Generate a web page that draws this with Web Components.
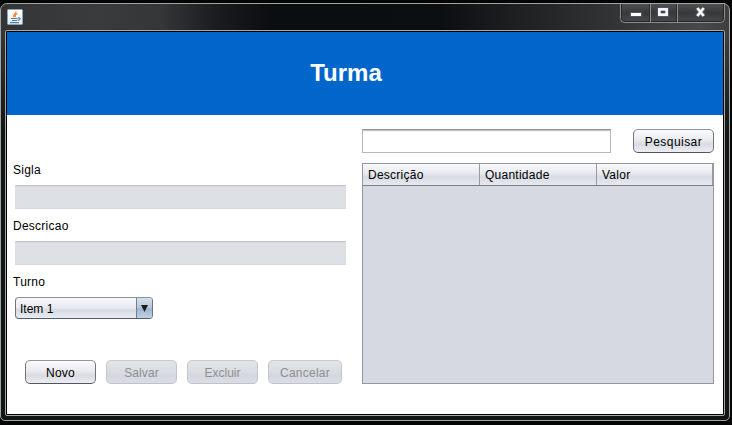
<!DOCTYPE html>
<html lang="pt-BR"><head><meta charset="utf-8"><title>Turma</title>
<style>
html,body{margin:0;width:732px;height:425px;overflow:hidden;background:#050505}
body{font:12px "Liberation Sans",Arial,sans-serif;color:#000}
.left{display:flex;flex-direction:column;padding:48px 0 0 6px;width:349px;box-sizing:border-box}
.actions{display:flex;gap:10px;padding:29px 0 0 12px}
.right{display:flex;flex-direction:column;gap:10px;padding:14px 9px 0 6px;flex:1}
.search{display:flex;justify-content:space-between}
.main{display:flex}
</style></head><body>
<app-window>
 <page-title>Turma</page-title>
 <div class="main">
  <div class="left">
   <form-field label="Sigla"><text-box disabled></text-box></form-field>
   <form-field label="Descricao"><text-box disabled></text-box></form-field>
   <form-field label="Turno"><combo-box>Item 1</combo-box></form-field>
   <div class="actions"><push-button style="letter-spacing:.25px">Novo</push-button><push-button disabled style="letter-spacing:.1px">Salvar</push-button><push-button disabled>Excluir</push-button><push-button disabled style="--w:74px;letter-spacing:.25px">Cancelar</push-button></div>
  </div>
  <div class="right">
   <div class="search"><text-box style="--w:249px"></text-box><push-button style="--w:81px;letter-spacing:.45px">Pesquisar</push-button></div>
   <data-table columns="Descrição|Quantidade|Valor"></data-table>
  </div>
 </div>
</app-window>
<script>
const define=(name,html,setup)=>customElements.define(name,class extends HTMLElement{
  constructor(){super();this.attachShadow({mode:'open'}).innerHTML=html;}
  connectedCallback(){if(setup)setup(this,this.shadowRoot);}
});
define('app-window',`<style>
:host{display:block;box-sizing:border-box;width:730px;height:418px;margin-top:3px;border:1px solid #a2a4a4;border-radius:7px 7px 5px 5px;padding:0 4px 4px;
background:linear-gradient(180deg,transparent 30px,#111516 130px),linear-gradient(90deg,#343536 0,#3a3b3d 95px,#343638 160px,#1a1c1f 215px,#0b0e11 270px,#0c0f12 440px,#1a1c1e 500px,#303133 600px,#48494a 700px,#3d3e3f)}
header{height:26px;display:flex;justify-content:space-between}
.java{margin:5px 0 0 2px}
.frame{box-sizing:border-box;width:720px;height:386px;border:1px solid #a4a6a7;border-radius:2px;background:#000;padding:1px}
.content{width:716px;height:382px;background:#fff}
</style><header><svg class="java" width="16" height="16" viewBox="0 0 16 16"><defs><linearGradient id="g" x2="0" y2="1"><stop stop-color="#fff"/><stop offset="1" stop-color="#e6ebee"/></linearGradient></defs><rect x=".5" y=".5" width="15" height="15" rx="1" fill="url(#g)" stroke="#8aa6b6"/><path d="M9 2.500C9.500 4.500 5 5.500 7.300 8.300M10.500 4.600C7.900 5.500 8 6.500 8.600 8" fill="none" stroke="#ed8130" stroke-width="1.200"/><path d="M4 9.500H10.800M5 11.500H10M3 13.700H12M11 8.900C14.200 8.400 13.500 11 10.700 11.300" fill="none" stroke="#5382a1" stroke-width="1.200"/></svg><window-controls></window-controls></header><div class="frame"><div class="content"><slot></slot></div></div>`);
define('window-controls',`<style>:host{display:block;width:105px;height:20px;margin-top:-1px}svg{display:block}</style>
<svg width="105" height="20" viewBox="0 0 105 20"><defs><linearGradient id="b" x2="0" y2="1"><stop stop-color="#505152"/><stop offset=".5" stop-color="#37393a"/><stop offset="1" stop-color="#48494a"/></linearGradient></defs><path d="M.5 0V15.5Q.5 19.5 4.500 19.500H100.500Q104.500 19.500 104.500 15.500V0" fill="url(#b)" stroke="#8c8e8f"/><path d="M1.500 1V15Q1.500 18.500 5 18.500H100Q103.500 18.500 103.500 15V1" fill="none" stroke="#242526"/><path d="M0 .5H105" stroke="#a2a4a4"/><path d="M30.500 1V19M57.500 1V19" stroke="#8c8e8f"/><path d="M29.500 1V18M56.500 1V18" stroke="#292b2c"/>
<rect x="10.500" y="9.500" width="11" height="4" fill="#fff" stroke="#52556a"/><rect x="37.500" y="4.500" width="11" height="9" fill="#f4f4f5" stroke="#52556a"/><rect x="41" y="8" width="4" height="2" fill="#303248" stroke="#52556a" stroke-width=".6"/><g fill="none"><path d="M77 5L84 13M84 5L77 13" stroke="#52556a" stroke-width="4.800"/><path d="M77.300 5L83.700 13M83.700 5L77.300 13" stroke="#f6f6f7" stroke-width="2.800"/></g></svg>`);
define('page-title',`<style>:host{display:flex;align-items:center;justify-content:center;box-sizing:border-box;height:83px;background:#0066cc;color:#fff;font-size:24px;font-weight:bold;padding:0 38px 2px 0}</style><slot></slot>`);
define('form-field',`<style>:host{display:block;height:56px}label{display:block;height:14px;line-height:14px;margin-bottom:8px;letter-spacing:.25px}.control{padding-left:2px}</style><label></label><div class="control"><slot></slot></div>`,(e,r)=>r.querySelector('label').textContent=e.getAttribute('label'));
define('text-box',`<style>:host{display:block;box-sizing:border-box;width:var(--w,331px);height:24px;border:1px solid #b8b9bb;border-top-color:#8d8e91;background:linear-gradient(#c8c8ca 0 1px,#f2f2f3 1px 2px,#fff 2px)}:host([disabled]){border-color:#d5d8de #dadde3 #d6d9df;border-top-color:#c1c5cb;background:linear-gradient(#d4d7dc 0 1px,#dde0e5 1px)}</style>`);
define('combo-box',`<style>:host{display:flex;box-sizing:border-box;width:138px;height:22px;border:1px solid;border-color:#8b9099 #6a7480 #535d6b;border-radius:4px;overflow:hidden;background:linear-gradient(#f7f8fa,#e8eaf0 48%,#d7dae1 60%,#e9ebf2)}
span{flex:1;padding-left:4px;line-height:22px}i{box-sizing:border-box;width:16px;border-left:1px solid #6d8196;background:linear-gradient(#d6e0eb,#b5c7d8 48%,#9fb5ca 55%,#bfd3e5)}svg{display:block}</style><span><slot></slot></span><i><svg width="15" height="20"><path d="M4 7H11L7.500 14Z" fill="#1b1c1e"/></svg></i>`);
define('push-button',`<style>:host{display:block;box-sizing:border-box;width:var(--w,71px);height:24px;line-height:24px;text-align:center;border:1px solid;border-color:#92959b #70747d #50555f;border-radius:5px;background:linear-gradient(#fafbfc,#e9ebef 45%,#d8dbe1 65%,#eceef4)}
:host([disabled]){color:#8e8f91;border-color:#c8cbd1 #c2c5cc #bfc2c9;background:linear-gradient(#e1e4e8,#d9dce2 50%,#d4d7de 65%,#dadde5)}</style><slot></slot>`);
define('data-table',`<style>:host{display:block;box-sizing:border-box;width:352px;height:221px;border:1px solid #9297a1;background:#d6d9e1}
.head{display:flex;height:21px;border-bottom:1px solid #777e8c;background:linear-gradient(#f8f9fb,#e7eaee 45%,#d7dbe2 60%,#e7e9ef)}.head span{box-sizing:border-box;width:117px;padding-left:5px;line-height:22px;letter-spacing:.25px;border-right:1px solid #969ba5}.head span:last-child{width:116px}</style><div class="head"></div>`,(e,r)=>{r.querySelector('.head').replaceChildren(...e.getAttribute('columns').split('|').map(t=>{const s=document.createElement('span');s.textContent=t;return s;}));});
</script></body></html>
